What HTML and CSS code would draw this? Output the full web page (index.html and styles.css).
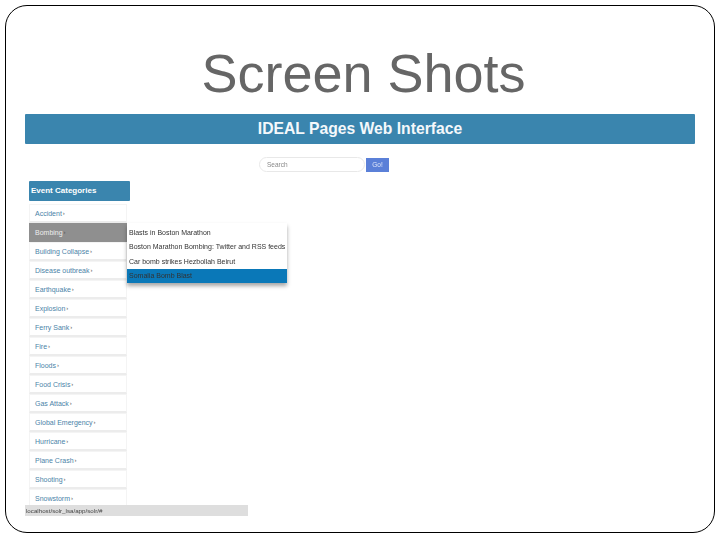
FILE: index.html
```html
<!DOCTYPE html>
<html>
<head>
<meta charset="utf-8" />
<title>Screen Shots</title>
<link rel="stylesheet" href="styles.css">
</head>
<body>
<div class="slide">
	<h1 class="slide_title">Screen Shots</h1>
	<div class="shot">
		<div class="banner">IDEAL Pages Web Interface</div>
		<div class="search">
			<input class="search_box" type="text" placeholder="Search" />
			<span class="search_btn">Go!</span>
		</div>
		<div class="side">
			<div class="side_head">Event Categories</div>
			<ul class="side_list">
				<li>Accident <i>›</i></li>
				<li class="on">Bombing <i>›</i>
					<ul class="sub">
						<li>Blasts in Boston Marathon</li>
						<li>Boston Marathon Bombing: Twitter and RSS feeds</li>
						<li>Car bomb strikes Hezbollah Beirut</li>
						<li class="sel">Somalia Bomb Blast</li>
					</ul>
				</li>
				<li>Building Collapse <i>›</i></li>
				<li>Disease outbreak <i>›</i></li>
				<li>Earthquake <i>›</i></li>
				<li>Explosion <i>›</i></li>
				<li>Ferry Sank <i>›</i></li>
				<li>Fire <i>›</i></li>
				<li>Floods <i>›</i></li>
				<li>Food Crisis <i>›</i></li>
				<li>Gas Attack <i>›</i></li>
				<li>Global Emergency <i>›</i></li>
				<li>Hurricane <i>›</i></li>
				<li>Plane Crash <i>›</i></li>
				<li>Shooting <i>›</i></li>
				<li>Snowstorm <i>›</i></li>
			</ul>
		</div>
		<div class="status">localhost/solr_lsa/app/solr/#</div>
	</div>
</div>
</body>
</html>
```

FILE: styles.css
```css
* { padding: 0; margin: 0; box-sizing: border-box; }
body { font-family: "Liberation Sans", Arial, sans-serif; background: #fff; }
li { list-style: none; }

.slide { width: 710px; height: 528px; margin: 5px; border: 1px solid #000; border-radius: 22px; overflow: hidden; padding: 0 19px; }
.slide_title { font-size: 54px; font-weight: normal; line-height: 62px; color: #666; text-align: center; margin: 36px 0 0 7px; height: 72px; }

.shot { position: relative; height: 402px; overflow: hidden; }
.banner { height: 30px; background: #3a85ae; color: #f4f8fb; font-size: 15.7px; font-weight: bold; line-height: 30px; text-align: center; border-radius: 1px; }

.search { display: flex; align-items: center; gap: 1px; margin: 13px 0 0 234px; height: 15px; filter: blur(0.4px); }
.search_box { width: 106px; height: 15px; border: 1px solid #e8e8e8; border-radius: 8px; padding-left: 7px; font: 6.5px "Liberation Sans", Arial, sans-serif; outline: none; }
.search_box::placeholder { color: #888; }
.search_btn { width: 23px; height: 14px; background: #5b80d8; color: #dfe6fa; font-size: 6.5px; line-height: 14px; text-align: center; }

.side { margin: 9px 0 0 4px; width: 101px; font-size: 7px; filter: blur(0.35px); }
.side_head { height: 20px; background: #3a85ae; color: #fff; font-size: 8px; font-weight: bold; line-height: 20px; padding-left: 2px; border-radius: 1px; }
.side_list { width: 98px; margin-top: 3px; }
.side_list > li { position: relative; height: 19px; line-height: 17px; padding-left: 5px; color: #4a83a8; background: #fff; border: 1px solid #f4f4f4; border-bottom: 2px solid #ececec; }
.side_list > li.on { background: #8f8f8f; color: #eee; border-color: #8f8f8f; }
.side_list i { font-style: normal; font-size: 6px; vertical-align: 1px; margin-left: -1px; color: #555; }

.sub { position: absolute; left: 97px; top: -1px; width: 160px; height: 60px; padding-top: 3px; background: #fff; color: #333; box-shadow: 0 3px 4px rgba(0, 0, 0, 0.35); z-index: 2; }
.sub li { height: 14.3px; line-height: 14px; padding-left: 2px; white-space: nowrap; }
.sub li.sel { background: #0a78b8; color: #333; }

.status { position: absolute; left: 0; bottom: 0; width: 223px; height: 11px; background: #dedede; color: #444; font-size: 6.2px; line-height: 11px; padding-left: 1px; z-index: 3; filter: blur(0.3px); }
```
